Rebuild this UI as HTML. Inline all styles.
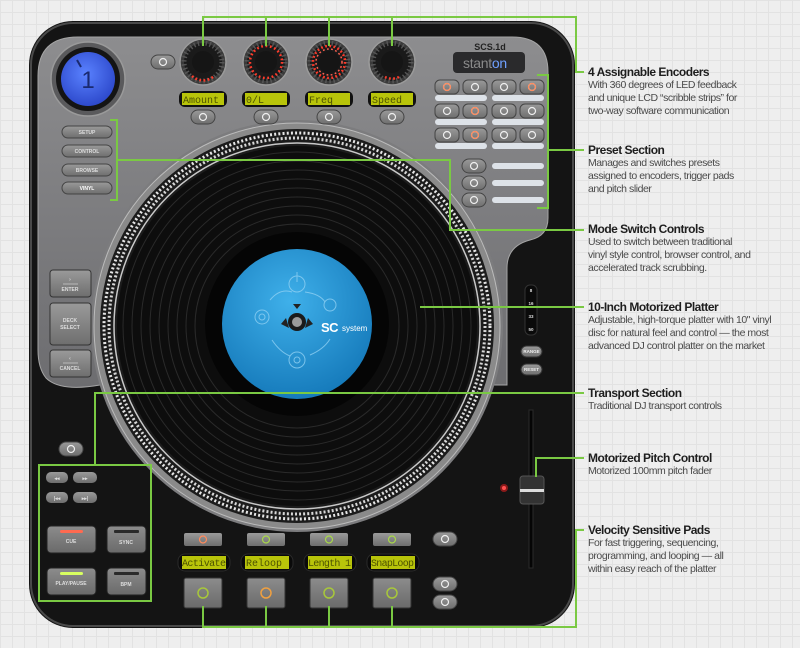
<!DOCTYPE html>
<html><head><meta charset="utf-8"><style>
html,body{margin:0;padding:0}
body{width:800px;height:648px;overflow:hidden;position:relative;background-color:#eeeeee;
background-image:linear-gradient(#e2e2e2 1px,transparent 1px),linear-gradient(90deg,#e2e2e2 1px,transparent 1px);
background-size:12px 12px;font-family:"Liberation Sans",sans-serif}
svg{position:absolute;left:0;top:0}
.d{position:absolute;left:588px;color:#4a4a4a;font-size:10.5px;line-height:12.8px;letter-spacing:-0.45px;white-space:nowrap}
.d b{display:block;color:#1e1e1e;font-size:12px;line-height:14px;letter-spacing:-0.5px}
</style></head><body>
<svg width="800" height="648" viewBox="0 0 800 648" font-family="Liberation Sans, sans-serif">
<defs>
<linearGradient id="plate" x1="0" y1="0" x2="0" y2="1"><stop offset="0" stop-color="#8d8d8f"/><stop offset="1" stop-color="#6d6d70"/></linearGradient>
<linearGradient id="btn" x1="0" y1="0" x2="0" y2="1"><stop offset="0" stop-color="#9a9a9a"/><stop offset="1" stop-color="#6e6e6e"/></linearGradient>
<linearGradient id="pad" x1="0" y1="0" x2="0" y2="1"><stop offset="0" stop-color="#8c8c8c"/><stop offset="1" stop-color="#6a6a6a"/></linearGradient>
<radialGradient id="lbl" cx="0.45" cy="0.35" r="0.7"><stop offset="0" stop-color="#3fb0ea"/><stop offset="1" stop-color="#1377b8"/></radialGradient>
<radialGradient id="jog" cx="0.45" cy="0.4" r="0.65"><stop offset="0" stop-color="#5a82ff"/><stop offset="1" stop-color="#2a45c8"/></radialGradient>
<g id="b"><rect x="-12" y="-7" width="24" height="14" rx="7" fill="url(#btn)" stroke="#444" stroke-width="1"/><circle r="3.5" fill="none" stroke="#eee" stroke-width="1.2"/></g>
<g id="bw"><rect x="-12" y="-7" width="24" height="14" rx="5" fill="url(#btn)" stroke="#444" stroke-width="1"/><circle r="3.5" fill="none" stroke="#eee" stroke-width="1.2"/></g>
<g id="knob"><circle r="23" fill="#3a3a3a" stroke="#9a9a9a" stroke-width="1.5"/><circle r="19" fill="#1a1a1a"/><circle r="19" fill="none" stroke="#555" stroke-width="5" stroke-dasharray="1.5 2.5"/><circle r="11" fill="#151515"/></g>
</defs>

<rect x="29" y="21" width="546" height="607" rx="44" fill="#141414"/>
<rect x="31" y="23" width="542" height="603" rx="42" fill="none" stroke="#4a4a4a" stroke-width="2"/>
<path d="M78 37 H512 Q548 37 548 72 V218 Q548 236 530 240 Q507 246 507 268 V385 H100 Q60 392 46 378 Q38 368 38 350 V76 Q38 37 78 37 Z" fill="url(#plate)" stroke="#a5a5a5" stroke-width="1"/>

<circle cx="297" cy="326" r="206" fill="#7c7c7e"/>
<circle cx="297" cy="326" r="203" fill="#8a8a8a" stroke="#bbb" stroke-width="1"/>
<circle cx="297" cy="326" r="197" fill="#1c1c1c"/>
<circle cx="297" cy="326" r="193" fill="none" stroke="#e6e6e6" stroke-width="3" stroke-dasharray="2 2.2"/>
<circle cx="297" cy="326" r="188" fill="none" stroke="#d8d8d8" stroke-width="3" stroke-dasharray="2 2.1"/>
<circle cx="297" cy="326" r="183" fill="none" stroke="#c8c8c8" stroke-width="1.5"/>
<circle cx="297" cy="326" r="180" fill="#0d0d0d"/>
<g fill="none" stroke="#2a2a2a" stroke-width="1">
<circle cx="297" cy="326" r="174"/><circle cx="297" cy="326" r="165"/><circle cx="297" cy="326" r="156"/><circle cx="297" cy="326" r="147"/><circle cx="297" cy="326" r="138"/><circle cx="297" cy="326" r="129"/><circle cx="297" cy="326" r="120"/><circle cx="297" cy="326" r="111"/><circle cx="297" cy="326" r="102"/>
</g>
<circle cx="297" cy="324" r="92" fill="#050505"/>
<circle cx="297" cy="324" r="75" fill="url(#lbl)"/>
<g fill="none" stroke="#8fd0f3" stroke-width="1" opacity="0.8">
<circle cx="297" cy="284" r="8"/><path d="M297 272 v10"/>
<circle cx="262" cy="317" r="7"/><circle cx="262" cy="317" r="3"/>
<circle cx="330" cy="305" r="6"/><circle cx="297" cy="360" r="8"/><circle cx="297" cy="360" r="3"/>
<path d="M270 300 q10 -12 22 -8 M305 292 q15 2 20 10 M272 340 q8 12 18 16 M310 355 q14 -6 20 -16"/>
</g>
<circle cx="297" cy="322" r="9" fill="#1a1a1a"/><circle cx="297" cy="322" r="5" fill="#9a9a9a"/>
<path d="M286 318 l-5 6 l8 4 z M308 318 l5 6 l-8 4 z M297 309 l-4 -5 h8 z" fill="#222"/>
<text x="321" y="332" font-size="13" font-weight="bold" fill="#fff" letter-spacing="-0.5">SC</text>
<text x="342" y="331" font-size="8" fill="#fff">system</text>

<circle cx="88" cy="79" r="37" fill="#5a5a5c" stroke="#9a9a9a" stroke-width="1.5"/>
<circle cx="88" cy="79" r="32" fill="#141414"/>
<circle cx="88" cy="79" r="27" fill="url(#jog)"/>
<text x="88" y="88" font-size="24" text-anchor="middle" fill="#1a2a70">1</text>
<path d="M77 60 l4 7" stroke="#1a2a70" stroke-width="2"/>

<use href="#b" x="163" y="62"/>

<use href="#knob" x="203" y="62"/><use href="#knob" x="266" y="62"/><use href="#knob" x="329" y="62"/><use href="#knob" x="392" y="62"/>
<g fill="none" stroke="#ff3a2a" stroke-width="2.5" stroke-dasharray="1.8 2.4">
<path d="M192 76 A16 16 0 0 0 214 76"/>
<circle cx="266" cy="62" r="16" stroke-dasharray="1.8 2.6"/>
<circle cx="329" cy="62" r="16"/><circle cx="329" cy="62" r="13" stroke-width="1.5" stroke="#ff6050"/>
<path d="M385 77 A16 16 0 0 0 399 77"/>
</g>

<g font-family="Liberation Mono, monospace" font-size="10" fill="#4d5200">
<rect x="179" y="91" width="48" height="16" rx="6" fill="#111"/><rect x="182" y="93" width="42" height="12" fill="#b8c40a"/><text x="183" y="103">Amount</text>
<rect x="242" y="91" width="48" height="16" rx="6" fill="#111"/><rect x="245" y="93" width="42" height="12" fill="#b8c40a"/><text x="246" y="103">0/L</text>
<rect x="305" y="91" width="48" height="16" rx="6" fill="#111"/><rect x="308" y="93" width="42" height="12" fill="#b8c40a"/><text x="309" y="103">Freq</text>
<rect x="368" y="91" width="48" height="16" rx="6" fill="#111"/><rect x="371" y="93" width="42" height="12" fill="#b8c40a"/><text x="372" y="103">Speed</text>
</g>
<use href="#b" x="203" y="117"/><use href="#b" x="266" y="117"/><use href="#b" x="329" y="117"/><use href="#b" x="392" y="117"/>

<text x="490" y="50" font-size="9" font-weight="bold" fill="#222" text-anchor="middle">SCS.1d</text>
<rect x="453" y="52" width="72" height="21" rx="4" fill="#2a2a2c"/>
<text x="463" y="68" font-size="14" fill="#8a8a8a" letter-spacing="-0.3">stant<tspan fill="#6fa0ff">on</tspan></text>

<use href="#bw" x="447" y="87"/><use href="#bw" x="475" y="87"/><use href="#bw" x="504" y="87"/><use href="#bw" x="532" y="87"/>
<use href="#bw" x="447" y="111"/><use href="#bw" x="475" y="111"/><use href="#bw" x="504" y="111"/><use href="#bw" x="532" y="111"/>
<use href="#bw" x="447" y="135"/><use href="#bw" x="475" y="135"/><use href="#bw" x="504" y="135"/><use href="#bw" x="532" y="135"/>
<g fill="none" stroke="#ff8a5c" stroke-width="1.2"><circle cx="447" cy="87" r="3.5"/><circle cx="532" cy="87" r="3.5"/><circle cx="475" cy="111" r="3.5"/><circle cx="475" cy="135" r="3.5"/></g>
<g fill="#dde2e8"><rect x="435" y="95" width="52" height="6" rx="3"/><rect x="492" y="95" width="52" height="6" rx="3"/>
<rect x="435" y="119" width="52" height="6" rx="3"/><rect x="492" y="119" width="52" height="6" rx="3"/>
<rect x="435" y="143" width="52" height="6" rx="3"/><rect x="492" y="143" width="52" height="6" rx="3"/>
<rect x="492" y="163" width="52" height="6" rx="3"/><rect x="492" y="180" width="52" height="6" rx="3"/><rect x="492" y="197" width="52" height="6" rx="3"/></g>
<use href="#b" x="474" y="166"/><use href="#b" x="474" y="183"/><use href="#b" x="474" y="200"/>

<g font-size="5" font-weight="bold" fill="#ddd" text-anchor="middle">
<rect x="62" y="126" width="50" height="12" rx="6" fill="url(#btn)" stroke="#444"/><text x="87" y="134">SETUP</text>
<rect x="62" y="145" width="50" height="12" rx="6" fill="url(#btn)" stroke="#444"/><text x="87" y="153">CONTROL</text>
<rect x="62" y="164" width="50" height="12" rx="6" fill="url(#btn)" stroke="#444"/><text x="87" y="172">BROWSE</text>
<rect x="62" y="182" width="50" height="12" rx="6" fill="url(#btn)" stroke="#444"/><text x="87" y="190" fill="#fff">VINYL</text>
</g>

<g font-size="5" font-weight="bold" fill="#ddd" text-anchor="middle">
<rect x="50" y="270" width="41" height="27" rx="3" fill="url(#btn)" stroke="#333"/><path d="M63 284 h15" stroke="#ddd" stroke-width="0.6"/><text x="70" y="281">›</text><text x="70" y="291">ENTER</text>
<rect x="50" y="303" width="41" height="42" rx="3" fill="url(#btn)" stroke="#333"/><text x="70" y="322">DECK</text><text x="70" y="329">SELECT</text>
<rect x="50" y="350" width="41" height="27" rx="3" fill="url(#btn)" stroke="#333"/><path d="M63 363 h15" stroke="#ddd" stroke-width="0.6"/><text x="70" y="360">‹</text><text x="70" y="370">CANCEL</text>
</g>

<rect x="525" y="285" width="12" height="50" rx="5" fill="#0a0a0a" stroke="#333"/>
<g font-size="4.5" fill="#ddd" text-anchor="middle" font-weight="bold"><text x="531" y="292">8</text><text x="531" y="305">16</text><text x="531" y="318">33</text><text x="531" y="331">50</text></g>
<g font-size="4.5" fill="#eee" text-anchor="middle" font-weight="bold">
<rect x="521" y="346" width="21" height="11" rx="5.5" fill="url(#btn)" stroke="#333"/><text x="531.5" y="353">RANGE</text>
<rect x="521" y="364" width="21" height="11" rx="5.5" fill="url(#btn)" stroke="#333"/><text x="531.5" y="371">RESET</text>
</g>
<rect x="529" y="410" width="4" height="158" fill="#050505" stroke="#2a2a2a"/>
<rect x="520" y="476" width="24" height="28" rx="3" fill="#333" stroke="#555"/>
<rect x="520" y="489" width="24" height="3" fill="#ddd"/>
<circle cx="504" cy="488" r="4" fill="#ff2020" opacity="0.5"/><circle cx="504" cy="488" r="2" fill="#ff5050"/>

<use href="#b" x="71" y="449"/>

<g fill="#ddd" font-size="5" font-weight="bold" text-anchor="middle">
<rect x="46" y="472" width="22" height="11" rx="5" fill="url(#btn)"/><rect x="73" y="472" width="24" height="11" rx="5" fill="url(#btn)"/><text x="57" y="480">◂◂</text><text x="85" y="480">▸▸</text>
<rect x="46" y="492" width="22" height="11" rx="5" fill="url(#btn)"/><rect x="73" y="492" width="24" height="11" rx="5" fill="url(#btn)"/><text x="57" y="500">|◂◂</text><text x="85" y="500">▸▸|</text>
<rect x="47" y="526" width="49" height="27" rx="4" fill="url(#pad)" stroke="#222"/><rect x="60" y="530" width="23" height="3" rx="1.5" fill="#ff6a50"/><text x="71" y="543">CUE</text>
<rect x="107" y="526" width="39" height="27" rx="4" fill="url(#pad)" stroke="#222"/><rect x="114" y="530" width="25" height="3" rx="1" fill="#2a2a2a"/><text x="126" y="544">SYNC</text>
<rect x="47" y="568" width="49" height="27" rx="4" fill="url(#pad)" stroke="#222"/><rect x="60" y="572" width="23" height="3" rx="1.5" fill="#d8ff60"/><text x="71" y="585">PLAY/PAUSE</text>
<rect x="107" y="568" width="39" height="27" rx="4" fill="url(#pad)" stroke="#222"/><rect x="114" y="572" width="25" height="3" rx="1" fill="#2a2a2a"/><text x="126" y="586">BPM</text>
</g>

<g>
<rect x="184" y="533" width="38" height="13" rx="2" fill="url(#btn)"/><circle cx="203" cy="539.5" r="3.5" fill="none" stroke="#ff8a5c" stroke-width="1.2"/>
<rect x="247" y="533" width="38" height="13" rx="2" fill="url(#btn)"/><circle cx="266" cy="539.5" r="3.5" fill="none" stroke="#a8d84a" stroke-width="1.2"/>
<rect x="310" y="533" width="38" height="13" rx="2" fill="url(#btn)"/><circle cx="329" cy="539.5" r="3.5" fill="none" stroke="#a8d84a" stroke-width="1.2"/>
<rect x="373" y="533" width="38" height="13" rx="2" fill="url(#btn)"/><circle cx="392" cy="539.5" r="3.5" fill="none" stroke="#a8d84a" stroke-width="1.2"/>
</g>
<use href="#b" x="445" y="539"/>
<g font-family="Liberation Mono, monospace" font-size="10" fill="#4d5200">
<rect x="178" y="554" width="52" height="17" rx="7" fill="#0a0a0a" stroke="#2a2a2a"/><rect x="182" y="556" width="44" height="13" fill="#b8c40a"/><text x="182" y="566" textLength="44">Activate</text>
<rect x="241" y="554" width="52" height="17" rx="7" fill="#0a0a0a" stroke="#2a2a2a"/><rect x="245" y="556" width="44" height="13" fill="#b8c40a"/><text x="246" y="566">Reloop</text>
<rect x="304" y="554" width="52" height="17" rx="7" fill="#0a0a0a" stroke="#2a2a2a"/><rect x="308" y="556" width="44" height="13" fill="#b8c40a"/><text x="308" y="566" textLength="43">Length 1</text>
<rect x="367" y="554" width="52" height="17" rx="7" fill="#0a0a0a" stroke="#2a2a2a"/><rect x="371" y="556" width="44" height="13" fill="#b8c40a"/><text x="371" y="566" textLength="43">SnapLoop</text>
</g>
<g>
<rect x="184" y="578" width="38" height="30" rx="2" fill="url(#pad)" stroke="#333"/><circle cx="203" cy="593" r="5" fill="none" stroke="#a8c83a" stroke-width="1.5"/>
<rect x="247" y="578" width="38" height="30" rx="2" fill="url(#pad)" stroke="#333"/><circle cx="266" cy="593" r="5" fill="none" stroke="#f0a040" stroke-width="1.5"/>
<rect x="310" y="578" width="38" height="30" rx="2" fill="url(#pad)" stroke="#333"/><circle cx="329" cy="593" r="5" fill="none" stroke="#a8c83a" stroke-width="1.5"/>
<rect x="373" y="578" width="38" height="30" rx="2" fill="url(#pad)" stroke="#333"/><circle cx="392" cy="593" r="5" fill="none" stroke="#a8c83a" stroke-width="1.5"/>
</g>
<use href="#b" x="445" y="584"/><use href="#b" x="445" y="602"/>

<g fill="none" stroke="#7ac943" stroke-width="2">
<path d="M203 46 V17 H576 V72 H584 M266 17 V46 M329 17 V46 M392 17 V46"/>
<path d="M537 75 H548 V208 H537 M548 150 H584"/>
<path d="M110 120 H117 V200 H110 M117 160 H450 V230 H584"/>
<path d="M420 307 H584"/>
<path d="M39 465 H151 V601 H39 Z M95 465 V393 H584"/>
<path d="M536 477 V458 H584"/>
<path d="M203 606 V627 H576 V530 H584 M266 606 V627 M329 606 V627 M392 606 V627"/>
</g>
</svg>

<div class="d" style="top:65px"><b>4 Assignable Encoders</b>With 360 degrees of LED feedback<br>and unique LCD “scribble strips” for<br>two-way software communication</div>
<div class="d" style="top:143px"><b>Preset Section</b>Manages and switches presets<br>assigned to encoders, trigger pads<br>and pitch slider</div>
<div class="d" style="top:222px"><b>Mode Switch Controls</b>Used to switch between traditional<br>vinyl style control, browser control, and<br>accelerated track scrubbing.</div>
<div class="d" style="top:300px"><b>10-Inch Motorized Platter</b>Adjustable, high-torque platter with 10" vinyl<br>disc for natural feel and control — the most<br>advanced DJ control platter on the market</div>
<div class="d" style="top:386px"><b>Transport Section</b>Traditional DJ transport controls</div>
<div class="d" style="top:451px"><b>Motorized Pitch Control</b>Motorized 100mm pitch fader</div>
<div class="d" style="top:523px"><b>Velocity Sensitive Pads</b>For fast triggering, sequencing,<br>programming, and looping — all<br>within easy reach of the platter</div>
</body></html>
